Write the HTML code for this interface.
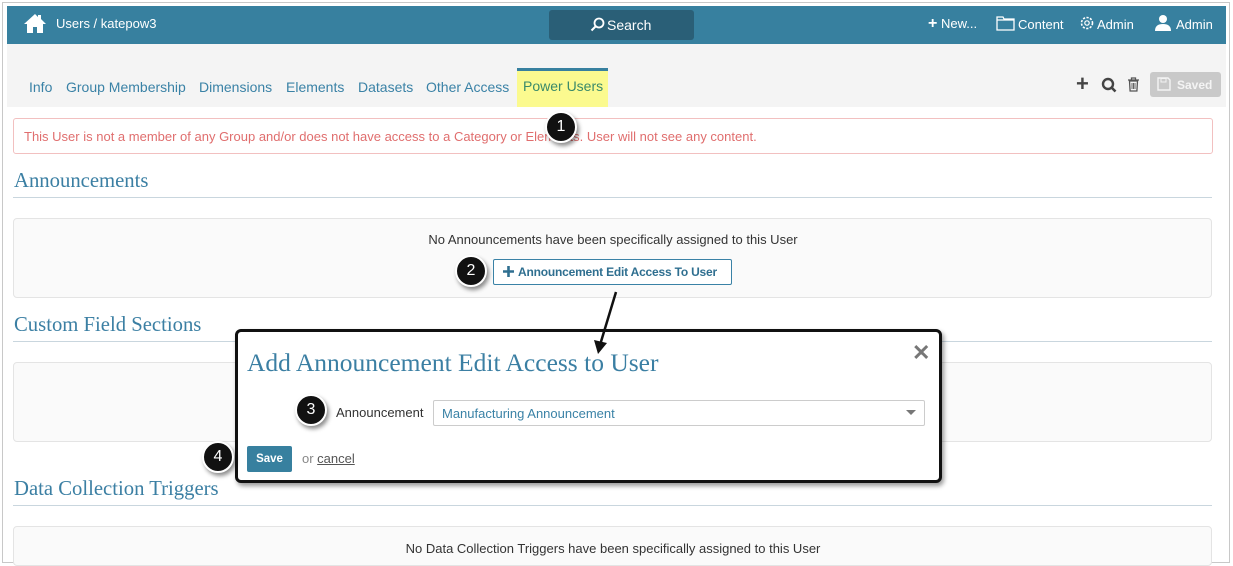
<!DOCTYPE html>
<html><head><meta charset="utf-8"><style>
*{box-sizing:border-box;margin:0;padding:0}
body{width:1233px;height:566px;background:#fff;font-family:"Liberation Sans",sans-serif;position:relative;overflow:hidden}
.frame{position:absolute;left:2px;top:2px;width:1228px;height:561px;border:1px solid #c8c8c8;background:#fff}
.abs{position:absolute}
.hdr{left:7px;top:6px;width:1219px;height:38px;background:#37809f;color:#fff;font-size:13px}
.tabs{left:7px;top:44px;width:1219px;height:63px;background:#f4f4f4}
.tab{position:absolute;top:79px;font-size:14px;color:#3a82a6}
.h2{font-family:"Liberation Serif",serif;font-size:20.7px;color:#3b7fa3}
.line{height:1px;background:#c9d6de;left:13px;width:1199px}
.panel{left:13px;width:1199px;border:1px solid #e4e4e4;border-radius:4px;background:#fafafa}
.badge{position:absolute;width:32px;height:32px;border-radius:50%;background:#111;border:2px solid #fff;color:#fff;font-size:16px;text-align:center;line-height:28px;box-shadow:2px 3px 4px rgba(0,0,0,.45)}
</style></head><body>
<div class="frame"></div>
<div class="abs hdr">
 <svg class="abs" style="left:16px;top:7px" width="24" height="21" viewBox="0 0 24 21"><path d="M12 1L1 11h3v9h6v-6h4v6h6v-9h3L18 6V2h-3v2z" fill="#fff"/></svg>
 <div class="abs" style="left:49px;top:10px">Users / katepow3</div>
 <div class="abs" style="left:542px;top:4px;width:145px;height:30px;background:#2a5f77;border-radius:3px"></div>
 <svg class="abs" style="left:583px;top:11px" width="15" height="15" viewBox="0 0 15 15"><circle cx="9" cy="6" r="4.5" fill="none" stroke="#fff" stroke-width="1.8"/><path d="M6 9L1.5 13.5" stroke="#fff" stroke-width="2"/></svg>
 <div class="abs" style="left:600px;top:11px;font-size:14px">Search</div>
 <div class="abs" style="left:921px;top:10px"><b style="font-size:16px;line-height:13px">+</b> New...</div>
 <svg class="abs" style="left:989px;top:10px" width="19" height="15" viewBox="0 0 19 15"><path d="M1 1h6l1 2h10v11H1z" fill="none" stroke="#fff" stroke-width="1.3"/><path d="M1 4h17" stroke="#fff" stroke-width="1.2"/></svg>
 <div class="abs" style="left:1011px;top:11px">Content</div>
 <svg class="abs" style="left:1072px;top:9px" width="16" height="16" viewBox="0 0 16 16"><circle cx="8" cy="8" r="5.5" fill="none" stroke="#fff" stroke-width="1.6" stroke-dasharray="2.2 1.4"/><circle cx="8" cy="8" r="2.2" fill="none" stroke="#fff" stroke-width="1.2"/></svg>
 <div class="abs" style="left:1090px;top:11px">Admin</div>
 <svg class="abs" style="left:1148px;top:8px" width="16" height="17" viewBox="0 0 16 17"><circle cx="8" cy="5" r="4" fill="#fff"/><path d="M0 17c0-5 3-7 8-7s8 2 8 7z" fill="#fff"/></svg>
 <div class="abs" style="left:1169px;top:11px">Admin</div>
</div>
<div class="abs tabs"></div>
<div class="abs" style="left:517px;top:68px;width:91px;height:39px;background:#fbfa8f;border-top:3px solid #37809f"></div>
<div class="tab" style="left:29px">Info</div>
<div class="tab" style="left:66px">Group Membership</div>
<div class="tab" style="left:199px">Dimensions</div>
<div class="tab" style="left:286px">Elements</div>
<div class="tab" style="left:358px">Datasets</div>
<div class="tab" style="left:426px">Other Access</div>
<div class="tab" style="left:523px;top:78px;color:#3a8a6a">Power Users</div>
<div class="abs" style="left:1076px;top:73px;font-size:22px;font-weight:bold;color:#444;line-height:22px">+</div>
<svg class="abs" style="left:1101px;top:77px" width="16" height="16" viewBox="0 0 16 16"><circle cx="7" cy="7" r="5" fill="none" stroke="#444" stroke-width="2.4"/><path d="M10.5 10.5L14.5 14.5" stroke="#444" stroke-width="2.6"/></svg>
<svg class="abs" style="left:1127px;top:77px" width="13" height="15" viewBox="0 0 13 15"><path d="M1 3h11M4.5 3V1h4v2M2.5 4h8l-.6 10H3.1z" fill="none" stroke="#555" stroke-width="1.3"/><path d="M5 6v6M6.5 6v6M8 6v6" stroke="#555" stroke-width=".9"/></svg>
<div class="abs" style="left:1150px;top:72px;width:71px;height:25px;background:#c9c9c9;border-radius:3px;color:#f4f4f4;font-size:12px;font-weight:bold;padding:6px 0 0 27px">Saved</div>
<svg class="abs" style="left:1157px;top:77px" width="14" height="14" viewBox="0 0 14 14"><path d="M1 1h10l2 2v10H1z" fill="none" stroke="#f4f4f4" stroke-width="1.4"/><rect x="4" y="1.5" width="5" height="3.5" fill="none" stroke="#f4f4f4"/></svg>
<div class="abs" style="left:13px;top:118px;width:1200px;height:36px;border:1px solid #f2c0c0;border-radius:3px;color:#e06e6e;font-size:13px;padding:10px 0 0 10px">This User is not a member of any Group and/or does not have access to a Category or Elements. User will not see any content.</div>
<div class="badge" style="left:545px;top:111px">1</div>
<div class="abs h2" style="left:14px;top:170px">Announcements</div>
<div class="abs line" style="top:197px"></div>
<div class="abs panel" style="top:218px;height:80px"></div>
<div class="abs" style="left:0;width:1226px;top:232px;text-align:center;font-size:13px;color:#333">No Announcements have been specifically assigned to this User</div>
<div class="abs" style="left:493px;top:259px;width:239px;height:26px;border:1px solid #3a82a6;border-radius:2px;background:#fff"></div>
<svg class="abs" style="left:503px;top:266px" width="11" height="11" viewBox="0 0 11 11"><path d="M5.5 0v11M0 5.5h11" stroke="#2f6f90" stroke-width="2.6"/></svg>
<div class="abs" style="left:518px;top:265px;color:#2f6f90;font-size:12px;font-weight:bold;letter-spacing:-.2px">Announcement Edit Access To User</div>
<div class="badge" style="left:455px;top:255px">2</div>
<div class="abs h2" style="left:14px;top:314px">Custom Field Sections</div>
<div class="abs line" style="top:341px"></div>
<div class="abs panel" style="top:362px;height:80px"></div>
<div class="abs h2" style="left:14px;top:478px">Data Collection Triggers</div>
<div class="abs line" style="top:505px"></div>
<div class="abs panel" style="top:526px;height:40px"></div>
<div class="abs" style="left:0;width:1226px;top:541px;text-align:center;font-size:13px;color:#333">No Data Collection Triggers have been specifically assigned to this User</div>
<div class="abs" style="left:235px;top:329px;width:707px;height:154px;border:3px solid #111;border-radius:6px;background:#fff;box-shadow:2px 3px 5px rgba(0,0,0,.4)"></div>
<div class="abs h2" style="left:247px;top:348px;font-size:25.5px">Add Announcement Edit Access to User</div>
<div class="abs" style="left:912px;top:340px;font-size:22px;color:#777;font-weight:bold">✕</div>
<div class="abs" style="left:336px;top:405px;font-size:13px;color:#333">Announcement</div>
<div class="abs" style="left:433px;top:400px;width:492px;height:26px;border:1px solid #ccc;border-radius:2px;color:#3a82a6;font-size:13px;padding:5px 0 0 8px">Manufacturing Announcement</div>
<div class="abs" style="left:906px;top:410px;width:0;height:0;border-left:5px solid transparent;border-right:5px solid transparent;border-top:5px solid #777"></div>
<div class="badge" style="left:295px;top:394px">3</div>
<div class="abs" style="left:247px;top:446px;width:45px;height:26px;background:#37809f;border-radius:2px;color:#fff;font-size:11.5px;font-weight:bold;text-align:center;line-height:26px">Save</div>
<div class="abs" style="left:302px;top:451px;font-size:13px;color:#888">or <span style="color:#555;text-decoration:underline">cancel</span></div>
<div class="badge" style="left:202px;top:441px">4</div>
<svg class="abs" style="left:585px;top:290px" width="40" height="70" viewBox="0 0 40 70"><path d="M31 2L15 55" stroke="#111" stroke-width="2.5"/><path d="M9 50l4 14 9-11z" fill="#111"/></svg>
</body></html>
